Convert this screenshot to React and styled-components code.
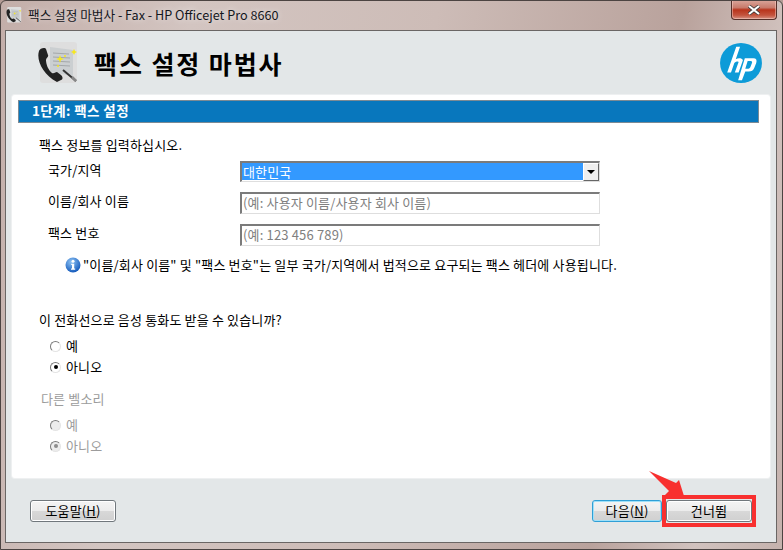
import styled, { createGlobalStyle } from 'styled-components'

const Global = createGlobalStyle`
    html, body {
        margin: 0;
        padding: 0;
        background: #b49c96;
    }
    * {
        box-sizing: border-box;
    }
    body {
        font-family: "Noto Sans CJK KR", "Liberation Sans", sans-serif;
        font-size: 13px;
        color: #000;
    }
`;

const Frame = styled.div`
    position: relative;
    width: 783px;
    height: 550px;
    border: 1px solid #4c4442;
    border-radius: 6px 6px 0 0;
    padding: 0 5px 6px 4px;
    display: flex;
    flex-direction: column;
    overflow: hidden;
    background: linear-gradient(100deg, #c3aea9 0%, #d3c5c1 22%, #cdbcb7 50%, #b9a29c 78%, #d1c2be 90%, #c5b2ad 100%);
`;

const TitleBar = styled.div`
    height: 29px;
    flex: none;
    display: flex;
    align-items: flex-start;
    justify-content: space-between;
`;

const TitleLeft = styled.div`
    display: flex;
    align-items: center;
    gap: 6px;
    padding: 5px 0 0 1px;
`;

const TitleText = styled.span`
    font-size: 12.65px;
    line-height: 18px;
    color: #14161c;
    text-shadow: 0 0 6px rgba(255, 255, 255, 0.7);
`;

const CloseBtn = styled.div`
    width: 46px;
    height: 20px;
    margin-top: -1px;
    border: 1px solid #55302a;
    border-top: none;
    border-radius: 0 0 4px 4px;
    box-shadow: inset 0 0 0 1px rgba(255, 220, 210, 0.45);
    background: linear-gradient(#dba79c 0%, #c87b6c 40%, #b8341c 52%, #c4543e 80%, #d69283 100%);
    display: flex;
    align-items: center;
    justify-content: center;
`;

const Client = styled.div`
    flex: 1;
    min-height: 0;
    border: 1px solid #6a6664;
    background: #e3e7e8;
    display: flex;
    flex-direction: column;
    padding: 0 6px;
`;

const Header = styled.div`
    height: 64px;
    flex: none;
    display: flex;
    align-items: center;
    justify-content: space-between;
    padding: 0 8px 1px 25px;
`;

const HeaderLeft = styled.div`
    display: flex;
    align-items: center;
    gap: 15px;
`;

const WizardTitle = styled.h1`
    margin: 0;
    font-size: 25px;
    font-weight: 700;
    line-height: 30px;
    letter-spacing: 1.9px;
`;

const Card = styled.div`
    height: 383px;
    flex: none;
    background: #fff;
    border-radius: 3px;
    box-shadow: 0 0 0 1px #eef0f1;
    padding: 5px 11px 0 6px;
`;

const StepBar = styled.div`
    height: 23px;
    border: 1px solid #7c8a94;
    background: #0877bd;
    color: #fff;
    font-weight: 700;
    font-size: 13.5px;
    letter-spacing: 0.4px;
    line-height: 19px;
    padding-left: 13px;
`;

const Body = styled.div`
    padding: 13px 0 0 21px;
`;

const Line = styled.div`
    font-size: 13px;
    letter-spacing: 0.16px;
    line-height: 18px;
    color: ${(props) => (props.$disabled ? '#9c9c9c' : '#000')};
`;

const FieldGrid = styled.div`
    display: grid;
    grid-template-columns: 192px 360px;
    row-gap: 10px;
    padding: 7px 0 0 9px;
    align-items: center;
`;

const Label = styled.div`
    font-size: 13px;
    letter-spacing: 0.16px;
    line-height: 18px;
    margin-top: -4px;
`;

const TextField = styled.div`
    height: 22px;
    border: 1px solid #dedede;
    border-top: 2px solid #7b7b7b;
    border-left: 2px solid #7b7b7b;
    padding-left: 1px;
    font-size: 13px;
    letter-spacing: 0.16px;
    line-height: 18px;
    color: #808080;
`;

const SelectField = styled.div`
    height: 21px;
    border: 1px solid #dedede;
    border-top: 2px solid #7b7b7b;
    border-left: 2px solid #7b7b7b;
    display: flex;
`;

const SelectValue = styled.div`
    flex: 1;
    background: #3399ff;
    color: #fff;
    font-size: 13px;
    letter-spacing: 0.16px;
    line-height: 17px;
    padding-left: 1px;
    margin-bottom: 1px;
`;

const SelectArrow = styled.div`
    width: 16px;
    background: #efefef;
    border: 1px solid #fff;
    border-right-color: #666;
    border-bottom-color: #666;
    display: flex;
    align-items: center;
    justify-content: center;
    &::after {
        content: '';
        border: 4px solid transparent;
        border-top: 4px solid #000;
        border-bottom: none;
    }
`;

const Note = styled.div`
    display: flex;
    align-items: center;
    gap: 2px;
    padding: 10px 0 0 26px;
`;

const Question = styled(Line)`
    margin-top: 37px;
`;

const RadioGroup = styled.div`
    display: flex;
    flex-direction: column;
    gap: 3px;
    padding: 8px 0 0 11px;
`;

const RadioRow = styled.div`
    display: flex;
    align-items: center;
    gap: 5px;
    height: 18px;
`;

const RadioDot = styled.span`
    width: 11px;
    height: 11px;
    border-radius: 50%;
    border: 1px solid;
    border-color: #7b7b7b #e4e4e4 #e4e4e4 #7b7b7b;
    background: ${(props) => (props.$disabled ? '#ececec' : '#fff')};
    display: flex;
    align-items: center;
    justify-content: center;
    &::after {
        content: '';
        display: ${(props) => (props.$checked ? 'block' : 'none')};
        width: 4px;
        height: 4px;
        border-radius: 50%;
        background: ${(props) => (props.$disabled ? '#8c8c8c' : '#000')};
    }
`;

const SubHeading = styled(Line)`
    margin-top: 14px;
    margin-left: 2px;
`;

const Footer = styled.div`
    flex: 1;
    display: flex;
    align-items: flex-start;
    justify-content: space-between;
    padding: 22px 18px 0 18px;
`;

const FooterRight = styled.div`
    display: flex;
    align-items: flex-start;
`;

const Btn = styled.div`
    width: ${(props) => props.$width || 86}px;
    height: 22px;
    border: 1px solid ${(props) => (props.$active ? '#2f9fd6' : '#70777c')};
    border-radius: 3px;
    box-shadow: inset 0 0 0 1px ${(props) => (props.$active ? '#9fe0f8' : '#fff')};
    background: linear-gradient(#f4f4f4 0%, #ececec 48%, #d8d8d8 52%, #d0d0d0 100%);
    font-size: 13px;
    letter-spacing: 0.16px;
    line-height: 19px;
    text-align: center;
`;

const Highlight = styled.div`
    border: 4px solid #f8302f;
    margin: -5px -4px 0 0;
    padding: 1px 0 1px 0;
    background: #e3e7e8;
`;

const Key = styled.span`
    text-decoration: underline;
`;

const Arrow = styled.svg`
    position: absolute;
    left: 640px;
    top: 464px;
`;

function FaxIcon({ size }) {
    return (
        <svg width={size} height={size} viewBox="0 0 42 42">
            <rect x="3" y="0" width="37" height="41" rx="3" fill="#dedede" />
            <path d="M13 5 L36 8 L36 34 L13 30 Z" fill="#cbcfd1" />
            <path d="M16 11 L32 12 M16 15 L33 16 M16 19 L33 20 M16 23 L33 24" stroke="#a4a8aa" strokeWidth="1" />
            <path d="M2 9 C-1 18 6 33 20 40 L24 38 C26 37 26 35 24 33 L20 30 C18 30 17 32 15 31 C11 28 9 22 9 18 C9 16 12 15 11 13 L9 7 C8 5 3 6 2 9 Z" fill="#222" />
            <path d="M26 28 L39 39" stroke="#333" strokeWidth="2" />
            <path d="M35 35 L39 39" stroke="#888" strokeWidth="2.5" />
            <path d="M22 16 l1 -3 l1 3 l3 1 l-3 1 l-1 3 l-1 -3 l-3 -1 Z M36 9 l1 -2 l1 2 l2 1 l-2 1 l-1 2 l-1 -2 l-2 -1 Z" fill="#f6e71d" />
            <circle cx="28" cy="14" r="1" fill="#f6e71d" />
            <circle cx="21" cy="24" r="1" fill="#f6e71d" />
        </svg>
    )
}

function HpLogo() {
    return (
        <svg width="42" height="40" viewBox="0 0 44 42">
            <ellipse cx="22" cy="21" rx="22" ry="21" fill="#0d9bd8" />
            <path
                d="M17 4 L21 4 L16.5 17 C19 15.5 23 15.5 24 18 L19.5 31 L15.5 31 L19.5 20 C19.5 19 17 19 15 21 L11.5 31 L7.5 31 Z"
                fill="#fff"
            />
            <path
                d="M26 16 L35 16 C38 16 39 18 38 21 L36 26 C35 29 33 30 30 30 L26.5 30 L23 39 L19 39 Z M29 19 L26.5 27 L29.5 27 C31 27 31.5 26 32 25 L33.5 21 C34 20 33.5 19 32 19 Z"
                fill="#fff"
                fillRule="evenodd"
            />
        </svg>
    )
}

function InfoIcon() {
    return (
        <svg width="16" height="16" viewBox="0 0 16 16">
            <defs>
                <radialGradient id="infoFill" cx="40%" cy="30%" r="75%">
                    <stop offset="0" stopColor="#8fc4f5" />
                    <stop offset="1" stopColor="#0d54b8" />
                </radialGradient>
            </defs>
            <circle cx="8" cy="8" r="7.5" fill="url(#infoFill)" />
            <circle cx="8" cy="4.3" r="1.5" fill="#fff" />
            <path d="M6.2 6.8 H9.2 V11.5 H10.2 V12.8 H6 V11.5 H7 V8 H6.2 Z" fill="#fff" />
        </svg>
    )
}

function Radio({ label, checked, disabled }) {
    return (
        <RadioRow>
            <RadioDot $checked={checked} $disabled={disabled} />
            <Line $disabled={disabled}>{label}</Line>
        </RadioRow>
    )
}

export default function App() {
    return (
        <>
            <Global />
            <Frame>
                <TitleBar>
                    <TitleLeft>
                        <FaxIcon size={16} />
                        <TitleText>팩스 설정 마법사 - Fax - HP Officejet Pro 8660</TitleText>
                    </TitleLeft>
                    <CloseBtn>
                        <svg width="14" height="10" viewBox="0 0 14 10">
                            <path d="M2 1 L12 9 M12 1 L2 9" stroke="#3a3a3a" strokeWidth="3.6" />
                            <path d="M2 1 L12 9 M12 1 L2 9" stroke="#fff" strokeWidth="2.2" />
                        </svg>
                    </CloseBtn>
                </TitleBar>
                <Client>
                    <Header>
                        <HeaderLeft>
                            <FaxIcon size={42} />
                            <WizardTitle>팩스 설정 마법사</WizardTitle>
                        </HeaderLeft>
                        <HpLogo />
                    </Header>
                    <Card>
                        <StepBar>1단계: 팩스 설정</StepBar>
                        <Body>
                            <Line>팩스 정보를 입력하십시오.</Line>
                            <FieldGrid>
                                <Label>국가/지역</Label>
                                <SelectField>
                                    <SelectValue>대한민국</SelectValue>
                                    <SelectArrow />
                                </SelectField>
                                <Label>이름/회사 이름</Label>
                                <TextField>(예: 사용자 이름/사용자 회사 이름)</TextField>
                                <Label>팩스 번호</Label>
                                <TextField>(예: 123 456 789)</TextField>
                            </FieldGrid>
                            <Note>
                                <InfoIcon />
                                <Line>"이름/회사 이름" 및 "팩스 번호"는 일부 국가/지역에서 법적으로 요구되는 팩스 헤더에 사용됩니다.</Line>
                            </Note>
                            <Question>이 전화선으로 음성 통화도 받을 수 있습니까?</Question>
                            <RadioGroup>
                                <Radio label="예" />
                                <Radio label="아니오" checked />
                            </RadioGroup>
                            <SubHeading $disabled>다른 벨소리</SubHeading>
                            <RadioGroup>
                                <Radio label="예" disabled />
                                <Radio label="아니오" checked disabled />
                            </RadioGroup>
                        </Body>
                    </Card>
                    <Footer>
                        <Btn><span>도움말(<Key>H</Key>)</span></Btn>
                        <FooterRight>
                            <Btn $active $width={70}>다음(<Key>N</Key>)</Btn>
                            <Highlight>
                                <Btn>건너뜀</Btn>
                            </Highlight>
                        </FooterRight>
                    </Footer>
                </Client>
                <Arrow width="50" height="40" viewBox="0 0 50 40">
                    <path d="M8 6 L35 18 L38 15 L43 31 L24 30 L28 26 Z" fill="#f8302f" />
                </Arrow>
            </Frame>
        </>
    )
}
